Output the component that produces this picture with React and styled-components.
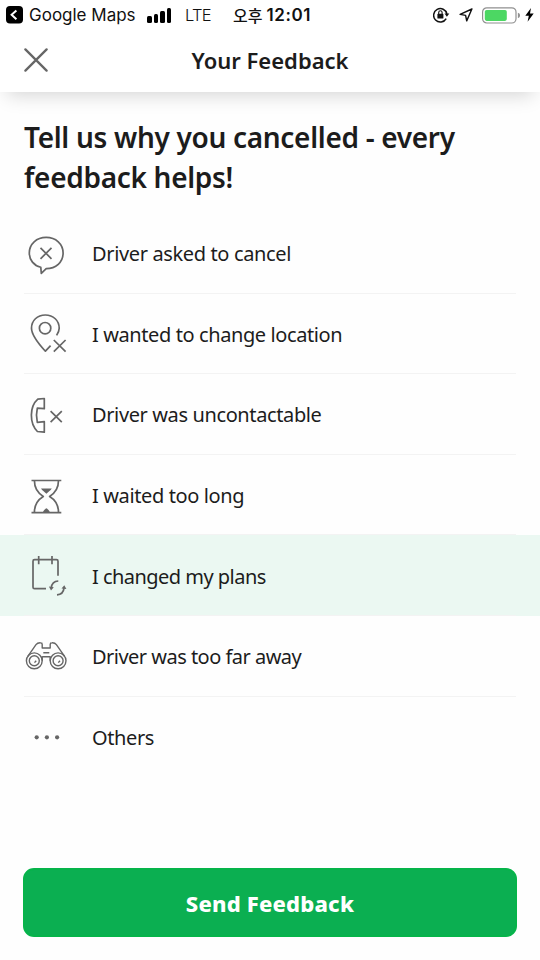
import React, { useState } from 'react';
import styled, { createGlobalStyle } from 'styled-components';

const reasons = [
  { id: 'asked', label: 'Driver asked to cancel', tracking: -0.36, icon: <BubbleIcon /> },
  { id: 'location', label: 'I wanted to change location', tracking: -0.4, icon: <PinIcon /> },
  { id: 'contact', label: 'Driver was uncontactable', tracking: -0.38, icon: <PhoneIcon /> },
  { id: 'waited', label: 'I waited too long', tracking: -0.38, icon: <HourglassIcon /> },
  { id: 'plans', label: 'I changed my plans', tracking: -0.53, icon: <CalendarIcon /> },
  { id: 'far', label: 'Driver was too far away', tracking: -0.52, icon: <BinocularsIcon /> },
  { id: 'others', label: 'Others', tracking: -0.4, icon: <DotsIcon /> },
];

function App() {

  const [selected, setSelected] = useState('plans');

  return (
    <Screen>
      <GlobalStyle />
      <Header>
        <StatusBar />
        <TitleBar>
          <CloseButton aria-label="Close">
            <svg width="24" height="24" viewBox="0 0 24 24" fill="none" stroke="#666" strokeWidth="2.3" strokeLinecap="round">
              <path d="M1.4 1.4 22.6 22.6M22.6 1.4 1.4 22.6" />
            </svg>
          </CloseButton>
          <Title>Your Feedback</Title>
        </TitleBar>
      </Header>
      <Question>Tell us why you cancelled - every feedback helps!</Question>
      <ReasonList>
        {reasons.map(reason => (
          <Reason key={reason.id} $selected={reason.id === selected} onClick={() => setSelected(reason.id)}>
            <ReasonBody>
              {reason.icon}
              <ReasonLabel $tracking={reason.tracking}>{reason.label}</ReasonLabel>
            </ReasonBody>
          </Reason>
        ))}
      </ReasonList>
      <Footer>
        <SendButton>Send Feedback</SendButton>
      </Footer>
    </Screen>
  );
}

export default App;

function StatusBar() {
  return (
    <StatusRow>
      <svg width="17" height="18" viewBox="0 0 17 18">
        <rect width="17" height="17.6" rx="4" fill="#000" />
        <path d="M10.4 4.4 5.6 8.8l4.8 4.4" fill="none" stroke="#fff" strokeWidth="2" />
      </svg>
      <BackApp>Google Maps</BackApp>
      <Signal>
        <SignalBar $height={7} />
        <SignalBar $height={9} />
        <SignalBar $height={12} />
        <SignalBar $height={15} />
      </Signal>
      <Network>LTE</Network>
      <Time><Meridiem>오후</Meridiem>12:01</Time>
      <StatusIcons>
        <svg width="17" height="16" viewBox="0 0 17 16" fill="none" stroke="#111" strokeWidth="1.5">
          <path d="M13.2 11.6A6.7 6.7 0 1 1 13.9 7" />
          <path d="M11.5 6.6h4.8L13.9 9.8z" fill="#111" stroke="none" />
          <rect x="4.4" y="6.8" width="6" height="4.8" rx=".6" fill="#111" stroke="none" />
          <path d="M5.7 7V5.5a1.7 1.7 0 0 1 3.4 0V7" strokeWidth="1.1" />
        </svg>
        <svg width="14" height="14" viewBox="0 0 14 14" fill="none" stroke="#111" strokeWidth="1.4" strokeLinejoin="round">
          <path d="M12.9 1 1.1 6.4l5.5 1 1.1 5.5z" />
        </svg>
        <svg width="39" height="17" viewBox="0 0 39 17">
          <rect x=".6" y=".8" width="33.4" height="15.2" rx="4.2" fill="#fff" stroke="#909090" strokeWidth="1.2" />
          <rect x="2.8" y="2.9" width="22" height="11" rx="1.8" fill="#4cd763" />
          <path d="M35.9 5.8c1.6.5 2.1 1.4 2.1 2.6s-.5 2.1-2.1 2.6z" fill="#909090" />
        </svg>
        <svg width="9" height="14" viewBox="0 0 9 14">
          <path d="M6 0 .3 7.7h3.5L2.6 13.8 8.7 5.6H5z" fill="#000" />
        </svg>
      </StatusIcons>
    </StatusRow>
  );
}

function BubbleIcon() {
  return (
    <Icon viewBox="0 0 48 48">
      <path d="M18.8 37.3C11.8 35.5 7.3 30 7.3 23 7.3 14 14.6 7.4 24.2 7.4S41.1 14 41.1 23c0 9.3-7.3 15.6-16.9 15.6l-4.9 4.8z" />
      <path d="m18.5 17.8 11 11m0-11-11 11" />
    </Icon>
  );
}

function PinIcon() {
  return (
    <Icon viewBox="0 0 48 48">
      <path d="M34.6 25.4c1.7-2.7 2.6-4.8 2.6-7.2C37.2 10.6 31.3 5 23.3 5S9.5 10.6 9.5 18.2c0 7.3 7.5 16 13.9 23l5.2-5.6" />
      <circle cx="23.1" cy="18.2" r="5.7" />
      <path d="m31.8 30 11.8 11.7m0-11.7L31.8 41.7" />
    </Icon>
  );
}

function PhoneIcon() {
  return (
    <Icon viewBox="0 0 48 48">
      <path d="m15.8 8.1 6.5-.6v10.2l-7-.5c-1.1 4.6-1.1 9.5 0 14.2l7-.8v10.6l-6.9-.7C7.3 32.5 7.3 15.6 15.8 8.1z" />
      <path d="M28.6 20.2 39.8 31.2m0-11L28.6 31.2" />
    </Icon>
  );
}

function HourglassIcon() {
  return (
    <Icon viewBox="0 0 48 48">
      <path d="M9.5 8.5h29.8M9.5 40.6h29.8" />
      <path d="M12.4 8.5c0 8 2.9 12.3 8.9 15.9-6 3.6-8.9 8-8.9 16M36.5 8.5c0 8-2.9 12.3-8.9 15.9 6 3.6 8.9 8 8.9 16" />
      <path d="M19 16.6h10.8c-1.4 2.2-3 3-5.4 5.2-2.4-2.2-4-3-5.4-5.2zM21 39.9c.8-2 2-2.9 3.4-3.7 1.4.8 2.6 1.7 3.4 3.7z" fill="#666" stroke="none" />
    </Icon>
  );
}

function CalendarIcon() {
  return (
    <Icon viewBox="0 0 48 48">
      <path d="M24 36.7H12.5c-.9 0-1.5-.6-1.5-1.5v-26c0-.9.6-1.5 1.5-1.5h22c.9 0 1.5.6 1.5 1.5v14.5M16.7 4v8.2M30 4v8.2" />
      <path d="M36.3 29c-3.900.2-6.600 2.900-7 6.700M35 42.900c3.900-.2 6.600-2.900 7-6.700" />
      <path d="M26.900 34.600l4.900.6-2.800 3.200zM39.500 36.500l4.900.6L42.300 33.300z" fill="#666" stroke="none" />
    </Icon>
  );
}

function BinocularsIcon() {
  return (
    <Icon viewBox="0 0 48 48" $thin>
      <circle cx="12.3" cy="27.8" r="7.9" />
      <circle cx="12.3" cy="27.8" r="5" />
      <circle cx="36.1" cy="27.8" r="7.9" />
      <circle cx="36.1" cy="27.8" r="5" />
      <path d="M5.8 23.4 14 11.7c1-1.4 2.5-2 4.5-1.9 1.1 0 1.7.7 1.7 1.7V15h8v-3.5c0-1 .6-1.7 1.7-1.7 2-.1 3.5.5 4.5 1.9l8.2 11.7" />
      <path d="M21.3 19.8h6M19.500 24.500c0-.5.5-.8 1.200-.8h7c.7 0 1.200.3 1.200.8M20.200 27.800v-4M28.200 27.800v-4" />
      <path d="m12.500 29.600 1.700-1.900M36.300 29.600l1.700-1.900" />
    </Icon>
  );
}

function DotsIcon() {
  return (
    <Icon viewBox="0 0 48 48">
      <g fill="#666" stroke="none">
        <circle cx="14.7" cy="24.3" r="2.1" />
        <circle cx="24.9" cy="24.3" r="2.1" />
        <circle cx="35.1" cy="24.3" r="2.1" />
      </g>
    </Icon>
  );
}

const GlobalStyle = createGlobalStyle`
* {
box-sizing: border-box;
}
body {
margin: 0;
background-color: #fff;
font-family: "Noto Sans", "Noto Sans CJK KR", sans-serif;
color: #1c1c1c;
}
`

const Screen = styled.div`
display: flex;
flex-direction: column;
width: 540px;
height: 960px;
overflow: hidden;
background-color: #fefefe;
`

const Header = styled.header`
height: 92px;
flex: none;
background-color: #fff;
box-shadow: 0 10px 18px -7px rgba(0, 0, 0, 0.17);
`

const StatusRow = styled.div`
display: flex;
align-items: center;
height: 30px;
padding: 0 6px;
font-family: Inter, "Noto Sans CJK KR", sans-serif;
color: #111;
white-space: nowrap;
`

const BackApp = styled.span`
width: 107px;
margin-left: 6px;
font-size: 17px;
`

const Signal = styled.div`
display: flex;
align-items: flex-end;
gap: 2px;
height: 15px;
margin-left: 11px;
`

const SignalBar = styled.div`
width: 4.5px;
height: ${props => props.$height}px;
border-radius: 1.5px;
background-color: #000;
`

const Network = styled.span`
width: 48px;
margin-left: 14px;
font-size: 16.5px;
font-weight: 300;
letter-spacing: -0.7px;
`

const Time = styled.span`
display: flex;
align-items: center;
gap: 4px;
font-size: 17px;
font-weight: 600;
letter-spacing: 0.6px;
`

const Meridiem = styled.span`
font-size: 16px;
font-weight: 500;
letter-spacing: 0;
`

const StatusIcons = styled.div`
display: flex;
align-items: center;
gap: 9px;
margin-left: auto;

svg:last-child {
margin-left: -5px;
}
`

const TitleBar = styled.div`
display: grid;
grid-template-columns: 48px 1fr 48px;
align-items: center;
height: 60px;
padding: 0 24px;
`

const CloseButton = styled.button`
display: flex;
padding: 0;
border: 0;
background: none;
`

const Title = styled.h1`
margin: 0;
font-size: 22px;
font-weight: 600;
text-align: center;
white-space: nowrap;
`

const Question = styled.h2`
margin: 25px 24px 16px;
font-size: 28px;
font-weight: 600;
line-height: 40px;
letter-spacing: -0.31px;
`

const ReasonList = styled.ul`
margin: 0;
padding: 0;
list-style: none;
`

const Reason = styled.li`
height: 80.6px;
padding: 0 24px;
background-color: ${props => props.$selected ? '#ebf8f2' : 'transparent'};
`

const ReasonBody = styled.div`
display: flex;
align-items: center;
height: 100%;
padding-top: 2px;
border-bottom: 1px solid #f3f3f3;

${Reason}:last-child & {
border-bottom-color: transparent;
}
`

const ReasonLabel = styled.span`
margin-left: 22px;
font-size: 20px;
letter-spacing: ${props => props.$tracking}px;
`

const Icon = styled.svg`
flex: none;
width: 48px;
height: 48px;
margin-left: -2px;
fill: none;
stroke: #666;
stroke-width: ${props => props.$thin ? 1.4 : 1.7};
stroke-linejoin: round;
`

const Footer = styled.footer`
margin-top: auto;
padding: 0 23px 23px;
`

const SendButton = styled.button`
display: block;
width: 100%;
height: 69px;
border: 2px solid #06b44a;
border-radius: 11px;
background-color: #0baf51;
font-family: inherit;
font-size: 22px;
font-weight: 800;
letter-spacing: 0.2px;
color: #fff;
`
